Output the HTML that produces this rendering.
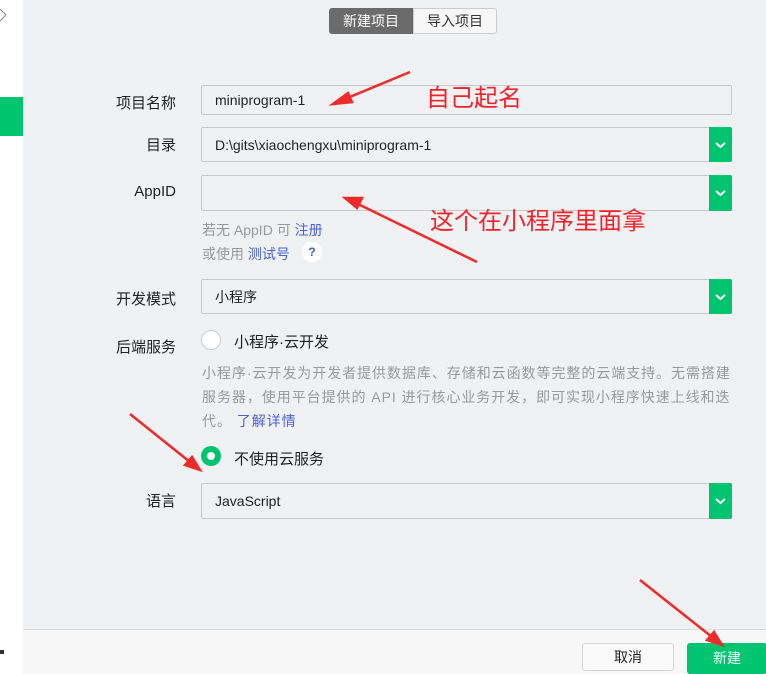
<!DOCTYPE html>
<html><head><meta charset="utf-8"><style>
*{margin:0;padding:0;box-sizing:border-box}
body{width:766px;height:674px;overflow:hidden;background:#f0f1f3;font-family:"Liberation Sans","Noto Sans CJK SC",sans-serif;position:relative;color:#222}
.side{position:absolute;left:0;top:0;width:23px;height:674px;background:#fff}
.abs{position:absolute}
.lbl{position:absolute;font-size:15px;color:#222;text-align:right;width:120px}
.inp{position:absolute;left:201px;width:531px;border:1px solid #c9c9c9;border-radius:2px;font-size:14px;padding-left:13px;display:flex;align-items:center;background:#f0f1f3}
.dd{position:absolute;right:-1px;top:-1px;bottom:-1px;width:23px;background:#00c46f;border-radius:0 2px 2px 0}
.dd svg{position:absolute;left:6px;top:50%;margin-top:-3px}
.gray{color:#999;font-size:14px}
.link{color:#4a62d8}
.red{color:#f3232b;font-size:24px;position:absolute}
</style></head><body>
<div class="side"></div>
<div class="abs" style="left:0;top:97px;width:23px;height:39px;background:#00c46f"></div>
<svg class="abs" style="left:0;top:8px" width="8" height="14"><path d="M0 1 L6 7 L0 13" stroke="#888" fill="none"/></svg>
<div class="abs" style="left:0;top:650px;width:4px;height:4px;background:#333"></div>
<div class="abs" style="left:329px;top:8px;width:84px;height:26px;background:#6b6b6b;color:#fff;font-size:14px;border-radius:3px 0 0 3px;text-align:center;line-height:26px">新建项目</div>
<div class="abs" style="left:413px;top:8px;width:84px;height:26px;background:#f7f7f7;border:1px solid #ccc;color:#333;font-size:14px;border-radius:0 3px 3px 0;text-align:center;line-height:24px">导入项目</div>

<div class="lbl" style="left:56px;top:92px">项目名称</div>
<div class="inp" style="top:85px;height:30px">miniprogram-1</div>
<div class="lbl" style="left:56px;top:134px">目录</div>
<div class="inp" style="top:127px;height:35px">D:\gits\xiaochengxu\miniprogram-1<div class="dd"><svg width="11" height="7"><path d="M1 1 L5.5 5 L10 1" stroke="#fff" stroke-width="2" fill="none"/></svg></div></div>
<div class="lbl" style="left:56px;top:183px">AppID</div>
<div class="inp" style="top:175px;height:36px"><div class="dd"><svg width="11" height="7"><path d="M1 1 L5.5 5 L10 1" stroke="#fff" stroke-width="2" fill="none"/></svg></div></div>
<div class="abs gray" style="left:202px;top:220px">若无 AppID 可 <span class="link">注册</span></div>
<div class="abs gray" style="left:202px;top:244px">或使用 <span class="link">测试号</span></div>
<div class="abs" style="left:302px;top:242px;width:20px;height:20px;border-radius:50%;background:#fff;color:#3a5bd0;font-size:12px;font-weight:bold;text-align:center;line-height:20px">?</div>
<div class="lbl" style="left:56px;top:288px">开发模式</div>
<div class="inp" style="top:279px;height:35px">小程序<div class="dd"><svg width="11" height="7"><path d="M1 1 L5.5 5 L10 1" stroke="#fff" stroke-width="2" fill="none"/></svg></div></div>
<div class="lbl" style="left:56px;top:336px">后端服务</div>
<div class="abs" style="left:201px;top:330px;width:20px;height:20px;border-radius:50%;background:#fff;border:1px solid #ccc"></div>
<div class="abs" style="left:234px;top:331px;font-size:15px">小程序·云开发</div>
<div class="abs gray" style="left:202px;top:361px;width:560px;line-height:24px;letter-spacing:0.95px;white-space:nowrap">小程序·云开发为开发者提供数据库、存储和云函数等完整的云端支持。无需搭建<br>服务器，使用平台提供的 API 进行核心业务开发，即可实现小程序快速上线和迭<br>代。 <span class="link">了解详情</span></div>
<div class="abs" style="left:201px;top:446px;width:20px;height:20px;border-radius:50%;background:#00c46f"><div style="position:absolute;left:6px;top:6px;width:8px;height:8px;border-radius:50%;background:#fff"></div></div>
<div class="abs" style="left:234px;top:448px;font-size:15px">不使用云服务</div>
<div class="lbl" style="left:56px;top:490px">语言</div>
<div class="inp" style="top:483px;height:36px">JavaScript<div class="dd"><svg width="11" height="7"><path d="M1 1 L5.5 5 L10 1" stroke="#fff" stroke-width="2" fill="none"/></svg></div></div>

<div class="abs" style="left:23px;top:629px;width:743px;height:45px;background:#f7f7f7;border-top:1px solid #ddd"></div>
<div class="abs" style="left:582px;top:643px;width:92px;height:28px;background:#fafafa;border:1px solid #d5d5d5;border-radius:3px;text-align:center;line-height:27px;font-size:14px">取消</div>
<div class="abs" style="left:687px;top:643px;width:80px;height:31px;background:#00c46f;border-radius:3px;text-align:center;line-height:30px;font-size:14px;color:#fff">新建</div>

<div class="red" style="left:426px;top:78px">自己起名</div>
<div class="red" style="left:430px;top:201px">这个在小程序里面拿</div>
<svg class="abs" style="left:0;top:0" width="766" height="674">
<g stroke="#ee2a2a" stroke-width="2.5" fill="#ee2a2a">
<line x1="410" y1="72" x2="345" y2="99"/><polygon points="333,104 348,93 352,102"/>
<line x1="477" y1="262" x2="358" y2="204"/><polygon points="345,198 362,198 357,208"/>
<line x1="130" y1="414" x2="190" y2="462"/><polygon points="200,470 185,465 192,457"/>
<line x1="640" y1="580" x2="712" y2="637"/><polygon points="722,645 707,640 714,632"/>
</g></svg>
</body></html>
